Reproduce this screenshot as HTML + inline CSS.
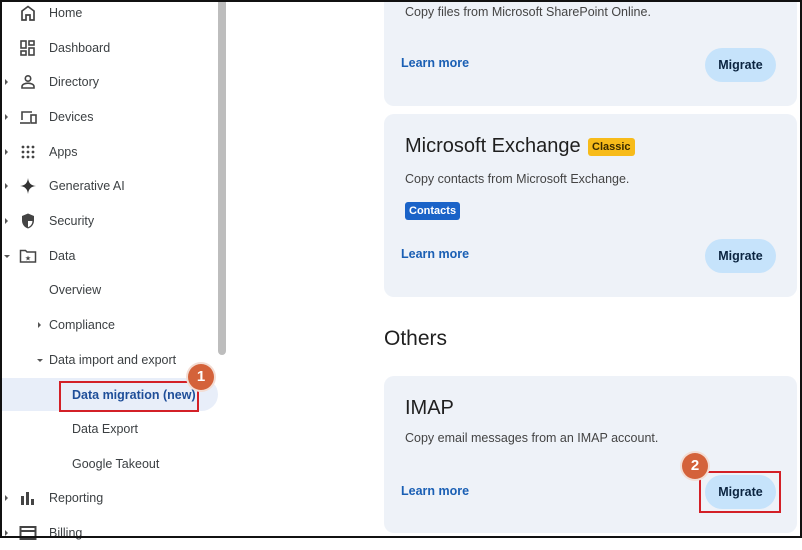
<!DOCTYPE html>
<html><head><style>
*{box-sizing:border-box;margin:0;padding:0}
body{width:802px;height:538px;overflow:hidden;background:#fff;font-family:"Liberation Sans",Arial,sans-serif;position:relative;color:#1f1f1f}
.frame{position:absolute;inset:0;border:2px solid #111;z-index:50;pointer-events:none}
.nav{position:absolute;left:0;top:0;width:230px;height:538px}
.item{position:absolute;left:0;height:34px;display:flex;align-items:center;font-size:12.5px;color:#3c4043}
.item .lbl{position:absolute;left:49px;white-space:nowrap}
.arr{position:absolute;left:5px;width:0;height:0;border-top:3px solid transparent;border-bottom:3px solid transparent;border-left:3px solid #555}
.arrd{position:absolute;width:0;height:0;border-left:3px solid transparent;border-right:3px solid transparent;border-top:3px solid #555}
.ic{position:absolute;left:19px;width:18px;height:18px}
.scroll{position:absolute;left:218px;top:0;width:8px;height:355px;background:#bdbdbd;border-radius:0 0 4px 4px}
.sel{position:absolute;left:0;top:378px;width:218px;height:33px;background:#e8eef9;border-radius:0 17px 17px 0}
.card{position:absolute;left:384px;width:413px;background:#eef2f8;border-radius:10px}
.desc{position:absolute;left:21px;font-size:12.5px;color:#444}
.lm{position:absolute;left:17px;font-size:12.5px;color:#1a5fb4;font-weight:bold}
.btn{position:absolute;left:321px;width:71px;height:34px;border-radius:17px;background:#c6e3fb;font-size:12.5px;font-weight:bold;color:#0b2440;text-align:center;line-height:34px}
.badge{position:absolute;width:26px;height:26px;border-radius:50%;background:#d4623a;color:#fff;font-weight:bold;font-size:15px;text-align:center;line-height:26px;box-shadow:0 0 0 2px #f3ddd4}
.red{position:absolute;border:2px solid #d32027}
</style></head><body>
<div class="frame"></div>
<div class="nav">
<div class="sel"></div>
<div class="scroll"></div>
<div class="item" style="top:-4px"><svg class="ic" viewBox="0 0 18 18"><path d="M3 16V7l6-4.5L15 7v9h-4v-5H7v5z" fill="none" stroke="#444" stroke-width="1.7"/></svg><span class="lbl">Home</span></div>
<div class="item" style="top:31px"><svg class="ic" viewBox="0 0 18 18" fill="none" stroke="#444" stroke-width="1.6"><rect x="2" y="2" width="5" height="7"/><rect x="10" y="2" width="5" height="4"/><rect x="2" y="12" width="5" height="4"/><rect x="10" y="9" width="5" height="7"/></svg><span class="lbl">Dashboard</span></div>
<div class="item" style="top:65px"><span class="arr"></span><svg class="ic" viewBox="0 0 18 18" fill="none" stroke="#444" stroke-width="1.6"><circle cx="9" cy="5.5" r="2.7"/><path d="M3 15v-1.5c0-2 3-3.3 6-3.3s6 1.3 6 3.3V15z"/></svg><span class="lbl">Directory</span></div>
<div class="item" style="top:100px"><span class="arr"></span><svg class="ic" viewBox="0 0 18 18" fill="none" stroke="#444" stroke-width="1.6"><path d="M3 12V4h10"/><path d="M1 15h10"/><rect x="12" y="7" width="5" height="8"/></svg><span class="lbl">Devices</span></div>
<div class="item" style="top:135px"><span class="arr"></span><svg class="ic" viewBox="0 0 18 18" fill="#444"><circle cx="4" cy="4" r="1.4"/><circle cx="9" cy="4" r="1.4"/><circle cx="14" cy="4" r="1.4"/><circle cx="4" cy="9" r="1.4"/><circle cx="9" cy="9" r="1.4"/><circle cx="14" cy="9" r="1.4"/><circle cx="4" cy="14" r="1.4"/><circle cx="9" cy="14" r="1.4"/><circle cx="14" cy="14" r="1.4"/></svg><span class="lbl">Apps</span></div>
<div class="item" style="top:169px"><span class="arr"></span><svg class="ic" viewBox="0 0 18 18"><path d="M9 1C9.5 6 12 8.5 17 9 12 9.5 9.5 12 9 17 8.5 12 6 9.5 1 9 6 8.5 8.5 6 9 1z" fill="#333"/></svg><span class="lbl">Generative AI</span></div>
<div class="item" style="top:204px"><span class="arr"></span><svg class="ic" viewBox="0 0 18 18"><path d="M9 1.5l6 2.5v4.5c0 4-2.7 7-6 8-3.3-1-6-4-6-8V4z" fill="#444"/><path d="M9 3.3v5.7h4.4c0 3-1.9 5.3-4.4 6.2z" fill="#fff"/></svg><span class="lbl">Security</span></div>
<div class="item" style="top:239px"><span class="arrd" style="left:4px"></span><svg class="ic" viewBox="0 0 18 18" fill="none" stroke="#444" stroke-width="1.5"><path d="M1.5 3.5h5l1.5 1.5h8.5v10h-15z"/><text x="9" y="13.5" font-size="7" fill="#444" stroke="none" text-anchor="middle">★</text></svg><span class="lbl">Data</span></div>
<div class="item" style="top:273px"><span class="lbl">Overview</span></div>
<div class="item" style="top:308px"><span class="arr" style="left:38px"></span><span class="lbl">Compliance</span></div>
<div class="item" style="top:343px"><span class="arrd" style="left:37px"></span><span class="lbl">Data import and export</span></div>
<div class="item" style="top:378px"><span class="lbl" style="left:72px;color:#1f4e99;font-weight:bold">Data migration (new)</span></div>
<div class="item" style="top:412px"><span class="lbl" style="left:72px">Data Export</span></div>
<div class="item" style="top:447px"><span class="lbl" style="left:72px">Google Takeout</span></div>
<div class="item" style="top:481px"><span class="arr"></span><svg class="ic" viewBox="0 0 18 18" fill="#444"><rect x="2" y="7" width="3" height="9"/><rect x="7" y="3" width="3" height="13"/><rect x="12" y="10" width="3" height="6"/></svg><span class="lbl">Reporting</span></div>
<div class="item" style="top:516px"><span class="arr"></span><svg class="ic" viewBox="0 0 18 18" fill="none" stroke="#444" stroke-width="2"><rect x="1.5" y="3" width="15" height="12"/><path d="M1.5 7h15"/></svg><span class="lbl">Billing</span></div>
</div>
<div class="red" style="left:59px;top:381px;width:140px;height:31px"></div>
<div class="badge" style="left:188px;top:364px">1</div>

<div class="card" style="top:-10px;height:116px">
<div class="desc" style="top:15px">Copy files from Microsoft SharePoint Online.</div>
<div class="lm" style="top:66px">Learn more</div>
<div class="btn" style="top:58px">Migrate</div>
</div>
<div class="card" style="top:114px;height:183px">
<div style="position:absolute;left:21px;top:21px;font-size:20px;color:#1f1f1f">Microsoft Exchange</div>
<div style="position:absolute;left:204px;top:24px;background:#f7bb1a;color:#3a2b00;font-size:11px;font-weight:bold;padding:3px 4px;border-radius:3px">Classic</div>
<div class="desc" style="top:58px">Copy contacts from Microsoft Exchange.</div>
<div style="position:absolute;left:21px;top:88px;background:#1a63c8;color:#fff;font-size:11px;font-weight:bold;padding:3px 4px;border-radius:3px">Contacts</div>
<div class="lm" style="top:133px">Learn more</div>
<div class="btn" style="top:125px">Migrate</div>
</div>
<div style="position:absolute;left:384px;top:327px;font-size:21px;color:#1f1f1f">Others</div>
<div class="card" style="top:376px;height:157px">
<div style="position:absolute;left:21px;top:21px;font-size:20px;color:#1f1f1f">IMAP</div>
<div class="desc" style="top:55px">Copy email messages from an IMAP account.</div>
<div class="lm" style="top:108px">Learn more</div>
<div class="btn" style="top:99px">Migrate</div>
</div>
<div class="red" style="left:699px;top:471px;width:82px;height:42px"></div>
<div class="badge" style="left:682px;top:453px">2</div>
</body></html>
